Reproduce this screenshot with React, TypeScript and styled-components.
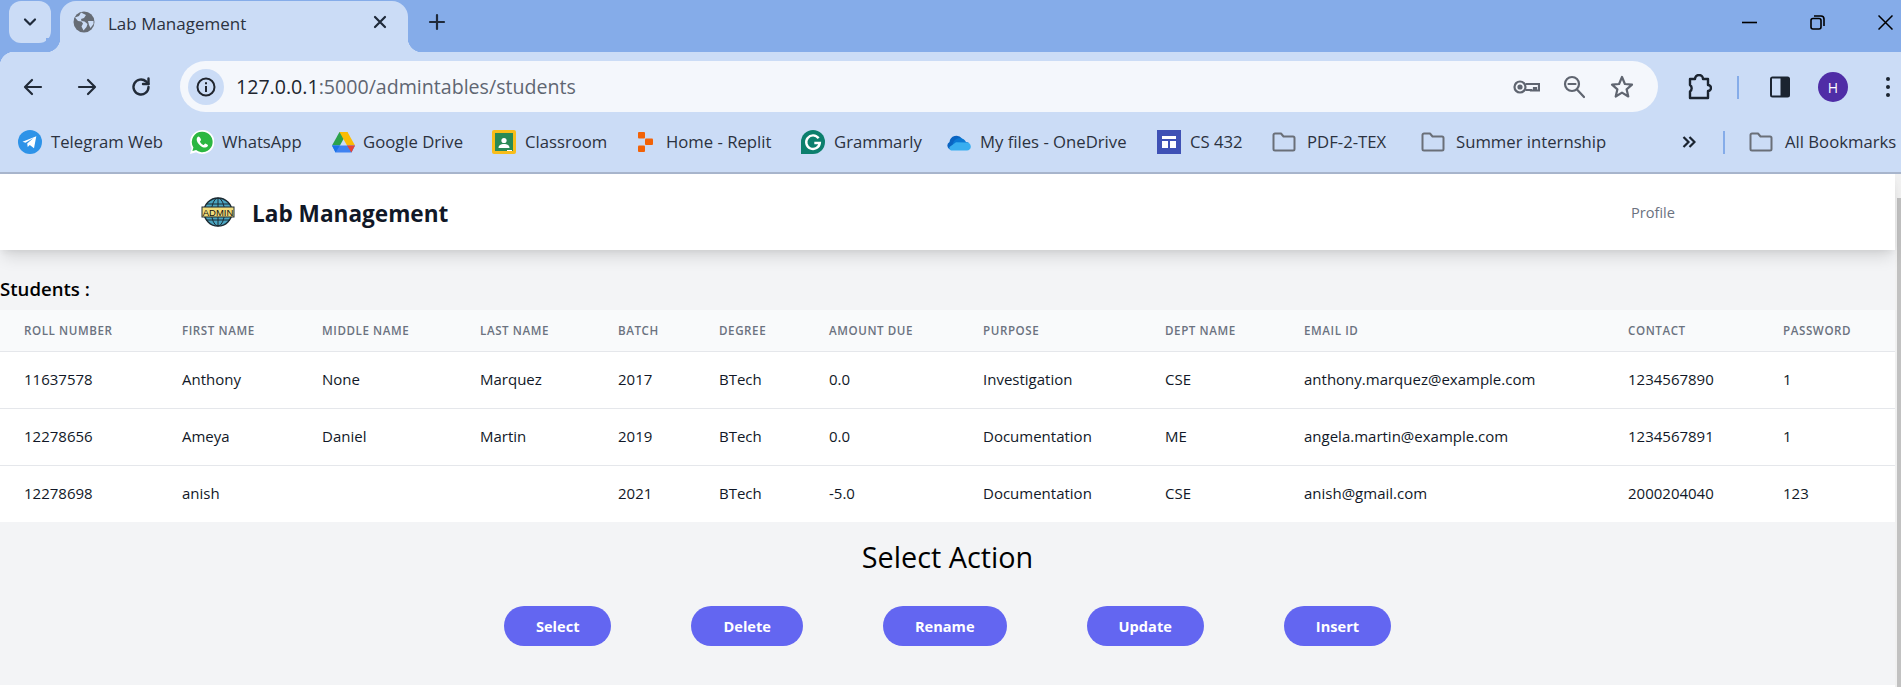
import React from "react";
import styled, { createGlobalStyle } from "styled-components";

const FONT = `"Open Sans", "Noto Sans", "Liberation Sans", sans-serif`;

const Global = createGlobalStyle`
  html, body { margin: 0; padding: 0; background: #fff; overflow: hidden; width: 1901px; height: 687px; }
  * { box-sizing: border-box; }
  body { font-family: ${FONT}; }
`;

const Strip = styled.div`
  height: 52px; background: #85ace9; display: flex; align-items: flex-start; padding-left: 9px;
`;
const TabMenu = styled.div`
  width: 42px; height: 42px; margin-top: 1px; border-radius: 12px; background: #cbdcf6;
  display: flex; align-items: center; justify-content: center;
`;
const Tab = styled.div`
  position: relative; width: 348px; height: 51px; margin: 1px 0 0 9px; padding: 0 0 9px 13px;
  background: #cbdcf6; border-radius: 16px 16px 0 0; display: flex; align-items: center;
  &::before, &::after { content: ""; position: absolute; bottom: 0; width: 14px; height: 14px; }
  &::before { left: -14px; background: radial-gradient(circle at 0 0, #85ace9 14px, #cbdcf6 14.5px); }
  &::after { right: -14px; background: radial-gradient(circle at 100% 0, #85ace9 14px, #cbdcf6 14.5px); }
`;
const TabTitle = styled.span`
  margin-left: 13px; width: 265px; font-size: 17px; color: #2b3240; white-space: nowrap; position: relative; top: 1px;
`;
const NewTab = styled.div`
  margin: 12px 0 0 19px; width: 20px; height: 20px; display: flex; color: #1f2a3a;
`;
const WindowControls = styled.div`
  margin-left: auto; height: 44px; display: flex; align-items: center; gap: 53px; padding-right: 8px;
`;

const Chrome = styled.div`
  background: #cbdcf6; border-bottom: 2px solid #a8b5cc; height: 122px;
  position: relative;
  &::before { content: ""; position: absolute; top: 0; left: 0; width: 14px; height: 14px;
    background: radial-gradient(circle at 100% 100%, #cbdcf6 14px, #85ace9 14.5px); }
`;
const Toolbar = styled.div`
  height: 70px; display: flex; align-items: center; padding-left: 6px;
`;
const NavBtn = styled.div`
  width: 54px; height: 36px; display: flex; align-items: center; justify-content: center; color: #222b38;
`;
const Omnibox = styled.div`
  width: 1478px; height: 51px; margin: -1px 0 0 12px; background: #f4f7fc; border-radius: 26px;
  display: flex; align-items: center; padding-left: 8px;
`;
const SiteInfo = styled.div`
  width: 36px; height: 36px; border-radius: 50%; background: #cbdcf6; display: flex; align-items: center; justify-content: center;
`;
const Url = styled.div`
  margin-left: 12px; width: 1277px; font-size: 19.6px; color: #5f6672; white-space: nowrap;
  b { font-weight: 400; color: #20252e; }
`;
const OmniIcon = styled.div<{ $ml: number }>`
  margin-left: ${(p) => p.$ml}px; display: flex;
`;
const ToolSlot = styled.div<{ $ml: number }>`
  margin-left: ${(p) => p.$ml}px; display: flex; align-items: center;
`;
const Divider = styled.div<{ $ml: number; $h: number }>`
  margin-left: ${(p) => p.$ml}px; width: 2px; flex: none; height: ${(p) => p.$h}px; background: #85ace9;
`;
const Avatar = styled.div`
  width: 30px; height: 30px; border-radius: 50%; background: #4f2da6; color: #fff; font-size: 14px;
  display: flex; align-items: center; justify-content: center;
`;
const Bookmarks = styled.div`
  height: 40px; display: flex; align-items: center; padding-left: 18px; overflow: hidden;
  > svg { flex: none; }
`;
const Bookmark = styled.div<{ $w: number; $ml?: number; $gap?: number }>`
  width: ${(p) => p.$w}px; margin-left: ${(p) => p.$ml ?? 0}px; flex: none; display: flex; align-items: center;
  gap: ${(p) => p.$gap ?? 9}px; font-size: 16.7px; line-height: 22px; color: #2b3240; white-space: nowrap;
  padding-bottom: 1px;
`;
const BookmarkIcon = styled.span`
  width: 24px; height: 24px; flex: none; display: flex; align-items: center; justify-content: center;
  position: relative; top: 0.5px;
`;

const Page = styled.div`
  display: flex; align-items: stretch; height: 513px;
`;
const Main = styled.div`
  width: 1895px; flex: none; height: 511px; background: #f3f4f6;
`;
const Track = styled.div`
  flex: 1; background: #f1f1f1; padding: 24px 0 0 2px;
`;
const Thumb = styled.div`
  height: 100%; background: #c1c1c1;
`;
const Header = styled.header`
  height: 76px; background: #fff; display: flex; align-items: center; padding-left: 201px;
  box-shadow: 0 10px 15px -3px rgba(0,0,0,.12), 0 4px 6px -2px rgba(0,0,0,.06); position: relative;
`;
const Brand = styled.div`
  margin-left: 17px; width: 1379px; flex: none; font-size: 22.6px; font-weight: 700; color: #111827; white-space: nowrap;
  position: relative; top: 1px;
`;
const ProfileLink = styled.div`
  font-size: 14.6px; color: #6b7280;
`;
const SectionTitle = styled.h3`
  margin: 0; padding-top: 27px; height: 60px; font-size: 18.6px; line-height: 24px; font-weight: 600; color: #000;
`;
const Table = styled.table`
  width: 1895px; table-layout: fixed; border-collapse: collapse; background: #fff;
`;
const Col = styled.col<{ $w: number }>`
  width: ${(p) => p.$w}px;
`;
const Th = styled.th`
  height: 41px; padding: 0 0 0 24px; background: #f9fafb; border-bottom: 1px solid #e5e7eb; text-align: left;
  font-size: 11.6px; font-weight: 600; letter-spacing: .05em; text-transform: uppercase; color: #6b7280; white-space: nowrap;
`;
const Td = styled.td`
  height: 57px; padding: 0 0 1px 24px; font-size: 15px; color: #111827; white-space: nowrap;
  tr:not(:last-child) > & { border-bottom: 1px solid #e5e7eb; }
`;
const ActionTitle = styled.h2`
  margin: 0; padding-top: 17px; font-size: 28.8px; line-height: 36px; font-weight: 400; text-align: center; color: #000;
`;
const Actions = styled.div`
  margin-top: 31px; display: flex; justify-content: center; gap: 80px;
`;
const ActionBtn = styled.button`
  height: 40px; padding: 0 32px; border: 0; border-radius: 20px; background: #6366f1; color: #fff;
  font: 700 14.6px ${FONT};
`;

const stroke = { fill: "none", stroke: "currentColor", strokeWidth: 2, strokeLinecap: "round", strokeLinejoin: "round" } as const;

const Logo = () => (
  <svg width="34" height="30" viewBox="0 0 34 30">
    <circle cx="17" cy="15" r="14" fill="#4aa5c1" stroke="#1c2b33" strokeWidth="1.4" />
    <ellipse cx="17" cy="15" rx="6.5" ry="14" fill="none" stroke="#1c2b33" />
    <path d="M17 1v28M5 7h24M5 23h24" stroke="#1c2b33" fill="none" />
    <rect x="1" y="10" width="32" height="10" fill="#f1dd7c" stroke="#1c2b33" />
    <text x="17" y="18.500" textAnchor="middle" fontSize="9.500" fontFamily="'Liberation Sans', sans-serif" fill="#111">ADMIN</text>
  </svg>
);
const Folder = () => (
  <svg width="24" height="20" viewBox="0 0 24 20" fill="none" stroke="#6a6f78" strokeWidth="2" strokeLinejoin="round">
    <path d="M1.5 3a1.5 1.5 0 0 1 1.5-1.5h6l2.5 3h9.500a1.500 1.500 0 0 1 1.500 1.500v11a1.500 1.500 0 0 1-1.500 1.500H3A1.500 1.500 0 0 1 1.500 17z" />
  </svg>
);
const Telegram = () => (
  <svg width="24" height="24" viewBox="0 0 24 24">
    <circle cx="12" cy="12" r="12" fill="#2e93e8" />
    <path d="M4.500 11.800 18.300 6.300l-2.300 12-4.200-3.200-2.100 2-.5-3.700 6.300-5.400-8 4.800z" fill="#fff" />
  </svg>
);
const WhatsApp = () => (
  <svg width="24" height="24" viewBox="0 0 24 24">
    <path d="M12 0a12 12 0 0 0-10.300 18L0 24l6.200-1.700A12 12 0 1 0 12 0z" fill="#fff" />
    <path d="M12 1.800a10.200 10.200 0 0 0-8.600 15.600l-1 3.600 3.700-1A10.200 10.200 0 1 0 12 1.800z" fill="#2bb741" />
    <path d="M8.500 6.500c-.6 0-1.800 1-1.800 2.900 0 3.300 4.500 8.200 8.500 8.200 1.700 0 2.800-1.200 2.800-2.300 0-.5-2.300-1.700-2.800-1.700-.4 0-1 1.300-1.500 1.300-1.200 0-3.700-2.400-3.700-3.500 0-.5 1-1 1-1.500 0-.6-1.100-3.400-2.500-3.400z" fill="#fff" />
  </svg>
);
const Drive = () => (
  <svg width="23" height="21" viewBox="0 0 23 21">
    <path d="M7.500 0h8l-7.600 13.500H0z" fill="#2ba24c" />
    <path d="M7.500 0h8L23 13.500h-8z" fill="#fbbc04" />
    <path d="M0 13.500h23L19.500 20.500h-16z" fill="#3f82f1" />
    <path d="M0 13.500h7.900l-4.300 7z" fill="#1a73e8" />
    <path d="M23 13.500h-8l4.400 7z" fill="#ea4335" />
  </svg>
);
const Classroom = () => (
  <svg width="24" height="24" viewBox="0 0 24 24">
    <rect width="24" height="24" rx="2" fill="#f8bd1a" />
    <rect x="3" y="3" width="18" height="18" fill="#2a8a55" />
    <circle cx="12" cy="10.500" r="2.600" fill="#fff" />
    <path d="M6.500 18c0-3 2.500-4 5.500-4s5.500 1 5.500 4z" fill="#fff" />
    <path d="M15 20h5v1h-5z" fill="#fff" />
  </svg>
);
const Replit = () => (
  <svg width="18" height="20" viewBox="0 0 18 20" fill="#f26207">
    <rect x="0" y="0" width="7" height="6.500" rx="1" />
    <rect x="7" y="6.500" width="8" height="6.500" rx="1" />
    <rect x="0" y="13.500" width="7" height="6.500" rx="1" />
  </svg>
);
const Grammarly = () => (
  <svg width="24" height="24" viewBox="0 0 24 24">
    <path d="M12 0a12 12 0 0 1 0 24H0V12A12 12 0 0 1 12 0z" fill="#0c7f6d" />
    <path d="M17.600 8.300A6.800 6.800 0 1 0 18.800 13h-5.500" fill="none" stroke="#fff" strokeWidth="2.400" />
  </svg>
);
const OneDrive = () => (
  <svg width="24" height="18" viewBox="0 0 24 18">
    <path d="M9 16.500H4A4 4 0 0 1 2.500 9 7 7 0 0 1 15 5.500L9 10z" fill="#0a64c2" />
    <path d="M7 8a7 7 0 0 1 12 1 5 5 0 0 1 3 1L12 15 5.500 11z" fill="#0a78d4" />
    <path d="M4 17.500h16a3.800 3.800 0 0 0 3.800-4 4 4 0 0 0-5-3.900L9 9.300 2.500 14a3 3 0 0 0 1.500 3.500z" fill="#38aef0" />
  </svg>
);
const Cs = () => (
  <svg width="24" height="24" viewBox="0 0 24 24">
    <rect width="24" height="24" fill="#3f51b5" />
    <path d="M5 6h14v3H5zM5 11h6v7H5zM13 11h6v7h-6z" fill="#fff" />
  </svg>
);
const GlobeIcon = () => (
  <svg width="22" height="22" viewBox="0 0 22 22">
    <circle cx="11" cy="11" r="10.500" fill="#666c75" />
    <path d="M8 1.500 6 5 2 6.500l3 3.500 3.500.5 1.500 2-1.500 3 2 4 3-3.500 1-3-3-2.500-3-.5-.5-2 3-1 2-3zM15 10h5.500v3l-3 4-1.500-3z" fill="#cbdcf6" />
  </svg>
);

const bookmarks = [
  { w: 172, g: 9, t: "Telegram Web", i: <Telegram /> },
  { w: 141, g: 8, t: "WhatsApp", i: <WhatsApp /> },
  { w: 161, g: 8, t: "Google Drive", i: <Drive /> },
  { w: 143, g: 9, t: "Classroom", i: <Classroom /> },
  { w: 166, g: 7, t: "Home - Replit", i: <Replit /> },
  { w: 146, g: 9, t: "Grammarly", i: <Grammarly /> },
  { w: 210, g: 9, t: "My files - OneDrive", i: <OneDrive /> },
  { w: 115, g: 9, t: "CS 432", i: <Cs /> },
  { w: 149, g: 11, t: "PDF-2-TEX", i: <Folder /> },
  { w: 261, g: 11, t: "Summer internship", i: <Folder /> },
];

const widths = [158, 140, 158, 138, 101, 110, 154, 182, 139, 324, 155, 136];
const columns = ["Roll Number", "First Name", "Middle Name", "Last Name", "Batch", "Degree", "Amount Due", "Purpose", "Dept Name", "Email ID", "Contact", "Password"];
const rows = [
  ["11637578", "Anthony", "None", "Marquez", "2017", "BTech", "0.0", "Investigation", "CSE", "anthony.marquez@example.com", "1234567890", "1"],
  ["12278656", "Ameya", "Daniel", "Martin", "2019", "BTech", "0.0", "Documentation", "ME", "angela.martin@example.com", "1234567891", "1"],
  ["12278698", "anish", "", "", "2021", "BTech", "-5.0", "Documentation", "CSE", "anish@gmail.com", "2000204040", "123"],
];

export default function App() {
  return (
    <>
      <Global />
      <Strip>
        <TabMenu>
          <svg width="14" height="10" viewBox="0 0 14 10" fill="none" stroke="#1f2a3a" strokeWidth="2.200" strokeLinecap="round" strokeLinejoin="round"><path d="m2 2.500 5 5 5-5" /></svg>
        </TabMenu>
        <Tab>
          <GlobeIcon />
          <TabTitle>Lab Management</TabTitle>
          <svg width="14" height="14" viewBox="0 0 14 14" stroke="#1f2a3a" strokeWidth="2.200" strokeLinecap="round"><path d="m2 2 10 10M12 2 2 12" /></svg>
        </Tab>
        <NewTab>
          <svg width="20" height="20" viewBox="0 0 20 20" stroke="currentColor" strokeWidth="2.200" strokeLinecap="round"><path d="M10 3v14M3 10h14" /></svg>
        </NewTab>
        <WindowControls>
          <svg width="15" height="15" viewBox="0 0 15 15" stroke="#000" strokeWidth="1.600"><path d="M0 7.500h15" /></svg>
          <svg width="15" height="15" viewBox="0 0 15 15" fill="none" stroke="#000" strokeWidth="1.600"><rect x="1" y="3.500" width="10" height="10.500" rx="2" /><path d="M4 1h7a3 3 0 0 1 3 3v7" /></svg>
          <svg width="15" height="15" viewBox="0 0 15 15" stroke="#000" strokeWidth="1.500"><path d="m.5.500 14 14M14.500.500l-14 14" /></svg>
        </WindowControls>
      </Strip>
      <Chrome>
        <Toolbar>
          <NavBtn><svg width="22" height="22" viewBox="0 0 22 22" {...stroke} strokeWidth={2.200}><path d="M19 11H3.500M10 4l-7 7 7 7" /></svg></NavBtn>
          <NavBtn><svg width="22" height="22" viewBox="0 0 22 22" {...stroke} strokeWidth={2.200}><path d="M3 11h15.500M12 4l7 7-7 7" /></svg></NavBtn>
          <NavBtn><svg width="22" height="22" viewBox="0 0 22 22" {...stroke} strokeWidth={2.400}><path d="M18.500 11a7.500 7.500 0 1 1-2.400-5.500L18.500 8" /><path d="M18.500 2.500V8H13" /></svg></NavBtn>
          <Omnibox>
            <SiteInfo>
              <svg width="20" height="20" viewBox="0 0 20 20" fill="none" stroke="#20252e" strokeWidth="2"><circle cx="10" cy="10" r="8.500" /><path d="M10 9v6M10 5.200v2" /></svg>
            </SiteInfo>
            <Url><b>127.0.0.1</b>:5000/admintables/students</Url>
            <OmniIcon $ml={0}>
              <svg width="27" height="16" viewBox="0 0 27 16" fill="none" stroke="#5f6570" strokeWidth="2.200"><circle cx="7" cy="8" r="5.500" /><path d="M12.500 5H26v6.500h-3V9h-2v2.500h-3V11h-5.500" /><circle cx="7" cy="8" r="1.500" fill="#5f6570" /></svg>
            </OmniIcon>
            <OmniIcon $ml={23}>
              <svg width="22" height="24" viewBox="0 0 22 24" fill="none" stroke="#5f6570" strokeWidth="2.200" strokeLinecap="round"><circle cx="9" cy="9" r="7" /><path d="M5.500 9h7M14 14.500l7 7.500" /></svg>
            </OmniIcon>
            <OmniIcon $ml={25}>
              <svg width="24" height="24" viewBox="0 0 24 24" fill="none" stroke="#5f6570" strokeWidth="2.200" strokeLinejoin="round"><path d="m12 2 2.900 7 7.100.600-5.400 4.700 1.700 7.200L12 17.600l-6.300 3.900 1.700-7.200L2 9.600 9.100 9z" /></svg>
            </OmniIcon>
          </Omnibox>
          <ToolSlot $ml={30}>
            <svg width="24" height="26" viewBox="0 0 24 26" fill="none" stroke="#1b2430" strokeWidth="2.400" strokeLinejoin="round"><path d="M2 5h5a4 4 0 0 1 8 0h5v6a3 3 0 0 1 0 6v7H2v-6.500a4 4 0 0 0 0-6.500z" /></svg>
          </ToolSlot>
          <Divider $ml={25} $h={23} />
          <ToolSlot $ml={30}>
            <svg width="22" height="24" viewBox="0 0 22 24"><rect x="1" y="1.500" width="20" height="21" rx="2.500" fill="#1b2430" /><rect x="3" y="3.500" width="8.500" height="17" fill="#cbdcf6" /></svg>
          </ToolSlot>
          <ToolSlot $ml={27}><Avatar>H</Avatar></ToolSlot>
          <ToolSlot $ml={38}>
            <svg width="4" height="22" viewBox="0 0 4 22" fill="#1b2430"><circle cx="2" cy="3" r="2" /><circle cx="2" cy="11" r="2" /><circle cx="2" cy="19" r="2" /></svg>
          </ToolSlot>
        </Toolbar>
        <Bookmarks>
          {bookmarks.map((b) => (
            <Bookmark key={b.t} $w={b.w} $gap={b.g}>
              <BookmarkIcon>{b.i}</BookmarkIcon>
              {b.t}
            </Bookmark>
          ))}
          <svg width="14" height="12" viewBox="0 0 14 12" fill="none" stroke="#1b2430" strokeWidth="2.200"><path d="m1.500 1 5 5-5 5M7.500 1l5 5-5 5" /></svg>
          <Divider $ml={27} $h={23} />
          <Bookmark $w={160} $ml={24} $gap={12}>
            <BookmarkIcon><Folder /></BookmarkIcon>
            All Bookmarks
          </Bookmark>
        </Bookmarks>
      </Chrome>
      <Page>
        <Main>
          <Header>
            <Logo />
            <Brand>Lab Management</Brand>
            <ProfileLink>Profile</ProfileLink>
          </Header>
          <SectionTitle>Students :</SectionTitle>
          <Table>
            <colgroup>
              {widths.map((w, i) => <Col key={i} $w={w} />)}
            </colgroup>
            <thead>
              <tr>{columns.map((c) => <Th key={c}>{c}</Th>)}</tr>
            </thead>
            <tbody>
              {rows.map((r) => (
                <tr key={r[0]}>{r.map((v, i) => <Td key={i}>{v}</Td>)}</tr>
              ))}
            </tbody>
          </Table>
          <ActionTitle>Select Action</ActionTitle>
          <Actions>
            {["Select", "Delete", "Rename", "Update", "Insert"].map((a) => <ActionBtn key={a}>{a}</ActionBtn>)}
          </Actions>
        </Main>
        <Track><Thumb /></Track>
      </Page>
    </>
  );
}
